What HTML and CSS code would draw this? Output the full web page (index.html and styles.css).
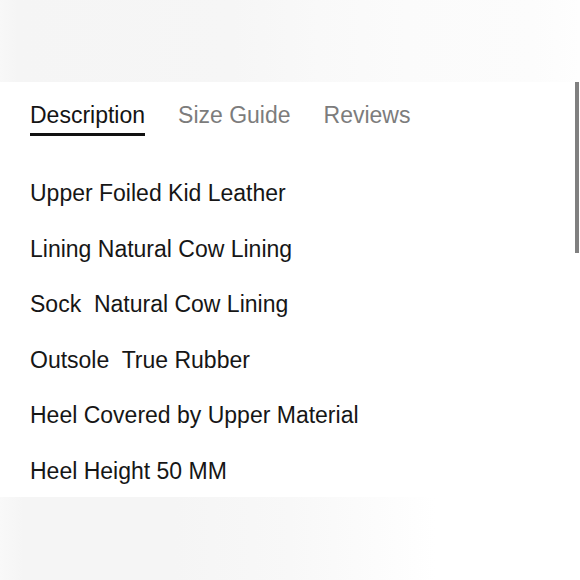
FILE: index.html
```html
<!DOCTYPE html>
<html lang="en">
<head>
<meta charset="utf-8">
<title>Product details</title>
<link rel="stylesheet" href="styles.css">
</head>
<body>
<div class="page">
  <div class="band band-top"></div>
  <section class="details">
    <nav class="tabs">
      <span class="tab active">Description</span>
      <span class="tab">Size Guide</span>
      <span class="tab">Reviews</span>
    </nav>
    <ul class="specs">
      <li>Upper Foiled Kid Leather</li>
      <li>Lining Natural Cow Lining</li>
      <li>Sock  Natural Cow Lining</li>
      <li>Outsole  True Rubber</li>
      <li>Heel Covered by Upper Material</li>
      <li>Heel Height 50 MM</li>
    </ul>
  </section>
  <div class="band band-bottom"></div>
  <div class="scrollbar"></div>
</div>
</body>
</html>
```
FILE: styles.css
```css
* { box-sizing: border-box; }
html, body {
  margin: 0;
  padding: 0;
  background: #ffffff;
}
body {
  font-family: "Liberation Sans", Arial, sans-serif;
  color: #161616;
}
.page {
  position: relative;
  width: 580px;
  height: 580px;
  overflow: hidden;
  display: flex;
  flex-direction: column;
}
.band {
  flex: none;
}
.band-top {
  height: 82px;
  background: linear-gradient(to right, #f8f8f8 0, #f5f5f5 3%, #f6f6f6 40%, #f9f9f9 55%, #fbfbfb 70%, #fcfcfc 92%, #fefefe 100%);
}
.band-bottom {
  height: 83px;
  background: linear-gradient(to right, #f9f9f9 0, #f5f5f5 4%, #f5f5f5 30%, #f8f8f8 50%, #fcfcfc 65%, #ffffff 75%);
}
.details {
  flex: 1;
  min-height: 0;
  overflow: hidden;
  padding: 19px 0 0 30px;
}
.tabs {
  display: flex;
  gap: 33px;
  font-size: 23px;
  line-height: 28px;
}
.tab {
  color: #7c7c7c;
  padding-bottom: 4px;
  border-bottom: 3px solid transparent;
}
.tab.active {
  color: #141414;
  border-bottom-color: #111111;
}
.specs {
  list-style: none;
  margin: 30px 0 0;
  padding: 0;
  font-size: 23px;
  line-height: 55.5px;
}
.specs li {
  white-space: pre;
}
.scrollbar {
  position: absolute;
  top: 82px;
  left: 575px;
  width: 4px;
  height: 171px;
  background: #808080;
}
```
